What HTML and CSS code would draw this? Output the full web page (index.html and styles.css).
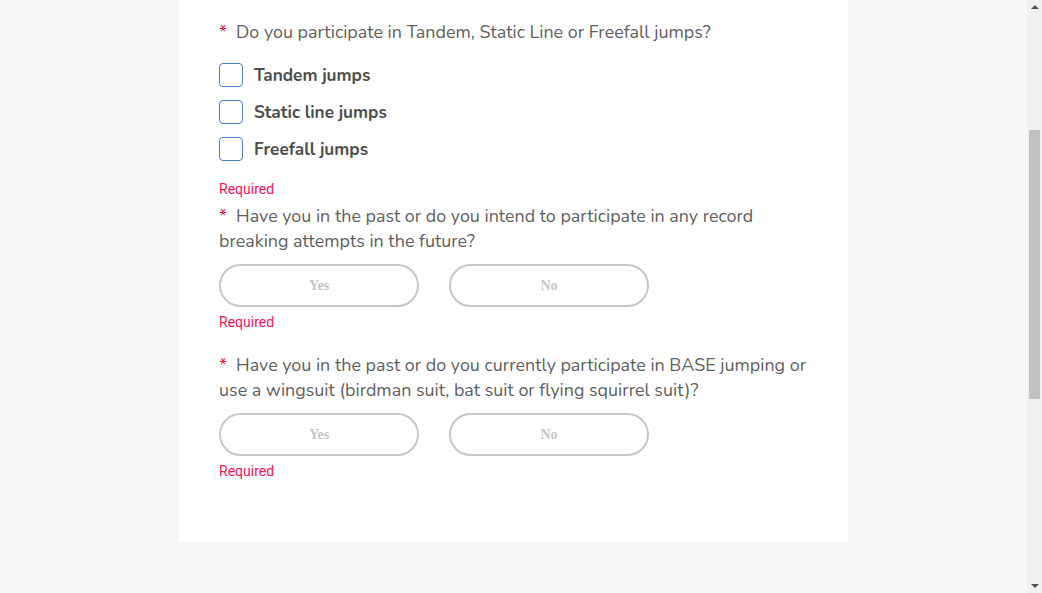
FILE: index.html
```html
<!DOCTYPE html>
<html lang="en">
<head>
<meta charset="utf-8">
<title>Jump questionnaire</title>
<link rel="stylesheet" href="styles.css">
</head>
<body>
<div class="viewport">
  <form class="card">
    <p class="question"><span class="star">*</span>Do you participate in Tandem, Static Line or Freefall jumps?</p>
    <div class="checks">
      <label class="check"><span class="box"></span>Tandem jumps</label>
      <label class="check"><span class="box"></span>Static line jumps</label>
      <label class="check"><span class="box"></span>Freefall jumps</label>
    </div>
    <div class="required req-1">Required</div>

    <p class="question q2"><span class="star">*</span>Have you in the past or do you intend to participate in any record breaking attempts in the future?</p>
    <div class="choices">
      <button type="button" class="pill">Yes</button>
      <button type="button" class="pill">No</button>
    </div>
    <div class="required">Required</div>

    <p class="question q3"><span class="star">*</span>Have you in the past or do you currently participate in BASE jumping or use a wingsuit (birdman suit, bat suit or flying squirrel suit)?</p>
    <div class="choices">
      <button type="button" class="pill">Yes</button>
      <button type="button" class="pill">No</button>
    </div>
    <div class="required">Required</div>
  </form>
</div>
<div class="scrollbar">
  <span class="arrow up"></span>
  <div class="track"><div class="thumb"></div></div>
  <span class="arrow down"></span>
</div>
</body>
</html>
```
FILE: styles.css
```css
html, body {
  margin: 0;
  height: 100%;
}
body {
  display: flex;
  overflow: hidden;
  background: #f7f7f7;
  font-family: "Nunito", "Open Sans", "Liberation Sans", sans-serif;
}
.viewport {
  flex: 1;
  display: flex;
  justify-content: center;
  align-items: flex-start;
}
.card {
  width: 669px;
  height: 542px;
  box-sizing: border-box;
  background: #fff;
  border-radius: 0 0 3px 3px;
  padding: 20px 34px 0 40px;
}
.question {
  margin: 0;
  font-size: 17.9px;
  line-height: 25px;
  color: #5f5f5f;
}
.star {
  color: #e8173b;
  margin-right: 9px;
}
.checks {
  display: flex;
  flex-direction: column;
  gap: 13px;
  margin-top: 18px;
}
.check {
  display: flex;
  align-items: center;
  gap: 11px;
  height: 24px;
  font-size: 17.2px;
  font-weight: 700;
  color: #4d4d4d;
}
.box {
  width: 24px;
  height: 24px;
  box-sizing: border-box;
  border: 1px solid #4a7cc7;
  border-radius: 4px;
}
.required {
  font-family: "Roboto", "Liberation Sans", sans-serif;
  font-size: 14px;
  line-height: 18px;
  color: #f0145a;
  margin-top: 6px;
}
.req-1 {
  margin-top: 19px;
}
.q2 {
  margin-top: 6px;
}
.q3 {
  margin-top: 22px;
}
.choices {
  display: flex;
  gap: 30px;
  margin-top: 10px;
}
.pill {
  width: 200px;
  height: 43px;
  box-sizing: border-box;
  border: 2px solid #c8c8c8;
  border-radius: 22px;
  background: #fff;
  font-family: "Liberation Serif", serif;
  font-weight: 700;
  font-size: 14px;
  color: #c6c6c6;
  padding: 0;
}
.scrollbar {
  width: 15px;
  background: #f1f1f1;
  display: flex;
  flex-direction: column;
  align-items: center;
}
.track {
  flex: 1;
  width: 100%;
  padding-top: 113px;
  box-sizing: border-box;
}
.thumb {
  width: 11px;
  height: 269px;
  margin: 0 auto;
  background: #c1c1c1;
}
.arrow {
  width: 0;
  height: 0;
  border-left: 4px solid transparent;
  border-right: 4px solid transparent;
}
.arrow.up {
  border-bottom: 4px solid #505050;
  margin-top: 5px;
  margin-bottom: 8px;
}
.arrow.down {
  border-top: 4px solid #505050;
  margin-bottom: 5px;
  margin-top: 8px;
}
```
